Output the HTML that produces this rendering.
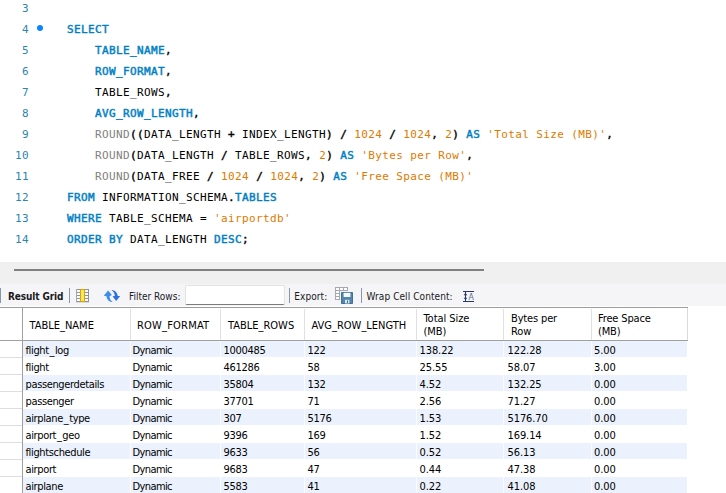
<!DOCTYPE html>
<html>
<head>
<meta charset="utf-8">
<title>Query</title>
<style>
html,body{margin:0;padding:0;}
body{width:726px;height:493px;position:relative;overflow:hidden;background:#fff;
  font-family:"DejaVu Sans Condensed","Liberation Sans",sans-serif;font-size:11px;color:#000;}
.abs{position:absolute;}
/* ---------- code editor ---------- */
#code{position:absolute;left:0;top:0;width:726px;height:262px;background:#fff;
  font-family:"DejaVu Sans Mono",monospace;font-size:11px;letter-spacing:0.3775px;}
.ln{position:absolute;left:0;width:726px;height:21px;line-height:21px;white-space:pre;}
.ln .n{position:absolute;left:0;width:29px;text-align:right;color:#2b86ad;}
.ln .c{position:absolute;left:67px;}
.k{color:#0080c4;-webkit-text-stroke:0.45px #0080c4;}
.o{color:#000;-webkit-text-stroke:0.4px #000;}
.f{color:#808080;}
.s{color:#dd7a00;}
.dot{position:absolute;left:37px;top:25px;width:6px;height:6px;border-radius:50%;background:#0a84ff;}
/* ---------- splitter strip ---------- */
#strip{position:absolute;left:0;top:262px;width:726px;height:22px;background:#f0f0f0;}
#strip i{position:absolute;left:14px;top:7px;width:470px;height:2px;background:#808080;}
/* ---------- toolbar ---------- */
#tb{position:absolute;left:0;top:284px;width:726px;height:22px;background:#f5f5f7;}
.sep{position:absolute;top:4px;width:1px;height:15px;background:#8797aa;}
.tl{position:absolute;top:1px;height:23px;line-height:23px;white-space:pre;font-size:10px;color:#1a1a1e;}
#filter{position:absolute;left:185px;top:1px;width:98px;height:18px;background:#fff;
  border:1px solid #e3e3e3;border-bottom:1px solid #7c7c7c;border-radius:2px;}
/* ---------- grid ---------- */
#grid{position:absolute;left:0;top:307px;width:726px;height:186px;background:#fff;}
#gtop{position:absolute;left:0;top:0;width:688px;height:1px;background:#9c9c9c;}
#gleft{position:absolute;left:22px;top:0;width:1px;height:186px;background:#a0a0a0;}
#ghb{position:absolute;left:0;top:33px;width:688px;height:1px;background:#a0a0a0;}
#ghr{position:absolute;left:687px;top:1px;width:1px;height:32px;background:#dadada;}
.hs{position:absolute;top:2px;width:1px;height:31px;background:#e0e0e0;}
.h{position:absolute;line-height:13px;white-space:pre;}
.row{position:absolute;left:23px;width:664px;height:16px;}
.row.a{background:#ebf2fd;}
.rh{position:absolute;left:0;width:22px;height:1px;background:#dedede;}
.cs{position:absolute;top:34px;width:1px;height:152px;background:rgba(255,255,255,.75);}
.d{position:absolute;margin-top:1px;margin-left:-0.5px;height:17px;line-height:17px;white-space:pre;letter-spacing:-0.3px;}
.d.t{letter-spacing:-0.36px;}
.d.y{letter-spacing:-0.6px;}
.d.p{letter-spacing:-0.1px;}
.d u{text-decoration:none;margin:0 0.8px;}
</style>
</head>
<body>

<div id="code">
  <div class="ln" style="top:-2px"><span class="n">3</span></div>
  <div class="ln" style="top:19px"><span class="n">4</span><span class="c"><span class="k">SELECT</span></span></div>
  <div class="ln" style="top:40px"><span class="n">5</span><span class="c">    <span class="k">TABLE_NAME</span><span class="o">,</span></span></div>
  <div class="ln" style="top:61px"><span class="n">6</span><span class="c">    <span class="k">ROW_FORMAT</span><span class="o">,</span></span></div>
  <div class="ln" style="top:82px"><span class="n">7</span><span class="c">    TABLE_ROWS<span class="o">,</span></span></div>
  <div class="ln" style="top:103px"><span class="n">8</span><span class="c">    <span class="k">AVG_ROW_LENGTH</span><span class="o">,</span></span></div>
  <div class="ln" style="top:124px"><span class="n">9</span><span class="c">    <span class="f">ROUND</span><span class="o">((</span>DATA_LENGTH <span class="o">+</span> INDEX_LENGTH<span class="o">)</span> <span class="o">/</span> <span class="s">1024</span> <span class="o">/</span> <span class="s">1024</span><span class="o">,</span> <span class="s">2</span><span class="o">)</span> <span class="k">AS</span> <span class="s">'Total Size (MB)'</span><span class="o">,</span></span></div>
  <div class="ln" style="top:145px"><span class="n">10</span><span class="c">    <span class="f">ROUND</span><span class="o">(</span>DATA_LENGTH <span class="o">/</span> TABLE_ROWS<span class="o">,</span> <span class="s">2</span><span class="o">)</span> <span class="k">AS</span> <span class="s">'Bytes per Row'</span><span class="o">,</span></span></div>
  <div class="ln" style="top:166px"><span class="n">11</span><span class="c">    <span class="f">ROUND</span><span class="o">(</span>DATA_FREE <span class="o">/</span> <span class="s">1024</span> <span class="o">/</span> <span class="s">1024</span><span class="o">,</span> <span class="s">2</span><span class="o">)</span> <span class="k">AS</span> <span class="s">'Free Space (MB)'</span></span></div>
  <div class="ln" style="top:187px"><span class="n">12</span><span class="c"><span class="k">FROM</span> INFORMATION_SCHEMA<span class="o">.</span><span class="k">TABLES</span></span></div>
  <div class="ln" style="top:208px"><span class="n">13</span><span class="c"><span class="k">WHERE</span> TABLE_SCHEMA = <span class="s">'airportdb'</span></span></div>
  <div class="ln" style="top:229px"><span class="n">14</span><span class="c"><span class="k">ORDER BY</span> DATA_LENGTH <span class="k">DESC</span><span class="o">;</span></span></div>
  <div class="dot"></div>
</div>

<div id="strip"><i></i></div>

<div id="tb">
  <div class="sep" style="left:0"></div>
  <div class="tl" style="left:8px;font-weight:bold;letter-spacing:-0.12px">Result Grid</div>
  <div class="sep" style="left:69px"></div>
  <!-- grid icon -->
  <svg class="abs" style="left:76px;top:5px" width="13" height="14" viewBox="0 0 13 14">
    <rect x="0" y="13" width="13" height="1" fill="#d9dade"/>
    <rect x="0" y="0" width="13" height="13" fill="#8d929c"/>
    <rect x="0" y="0" width="1" height="13" fill="#a3a7af"/>
    <path d="M1 1h3v2h-3zM1 4h3v2h-3zM1 7h3v2h-3zM1 10h3v2h-3zM9 1h3v2h-3zM9 4h3v2h-3zM9 7h3v2h-3zM9 10h3v2h-3z" fill="#fbfcff"/>
    <rect x="4" y="0" width="5" height="13" fill="#e0a200"/>
    <rect x="5" y="1" width="3" height="11" fill="#ffe85c"/>
  </svg>
  <!-- refresh icon -->
  <svg class="abs" style="left:100px;top:2px" width="24" height="20" viewBox="0 0 24 20">
    <path d="M8.1 4.6 L11.9 9.1 L9.5 10.2 C9.6 12.8 10.8 14.8 12.9 15.8 C10 16.4 7.1 14.6 6.4 10.3 L3.8 9.8 Z" fill="#3d8dec"/>
    <path d="M11.3 4 C14.2 4 17.3 6 17.8 10 L20.2 10 L16.2 15.1 L12.5 10.3 L14.8 10.1 C14.9 8 13.6 5.6 11.3 4 Z" fill="#2d70e2"/>
  </svg>
  <div class="tl" style="left:129px">Filter Rows:</div>
  <div id="filter"></div>
  <div class="sep" style="left:289px"></div>
  <div class="tl" style="left:294.3px;letter-spacing:0.08px">Export:</div>
  <!-- export icon -->
  <svg class="abs" style="left:335px;top:3px" width="20" height="19" viewBox="0 0 20 19">
    <rect x="0" y="0" width="13" height="13" fill="#a6a9b1"/>
    <path d="M1 1h3v2h-3zM5 1h3v2h-3zM9 1h3v2h-3zM1 4h3v2h-3zM5 4h3v2h-3zM9 4h3v2h-3zM1 7h3v2h-3zM5 7h3v2h-3zM9 7h3v2h-3zM1 10h3v2h-3zM5 10h3v2h-3zM9 10h3v2h-3z" fill="#fdfdfe"/>
    <rect x="5" y="4" width="14" height="14" fill="#f5f5f7"/>
    <rect x="6" y="5" width="12" height="12" rx="0.8" fill="#3f7298"/>
    <rect x="7" y="6" width="10" height="10" fill="#5286ac"/>
    <rect x="8.6" y="5.8" width="6.8" height="4.2" fill="#f7f8fa"/>
    <rect x="10" y="12.8" width="4.4" height="3.6" fill="#e2e5e8"/>
    <rect x="12" y="13.4" width="1" height="2.6" fill="#3f7298"/>
  </svg>
  <div class="sep" style="left:361px"></div>
  <div class="tl" style="left:366.5px;letter-spacing:0.08px">Wrap Cell Content:</div>
  <!-- wrap icon -->
  <svg class="abs" style="left:463px;top:7px" width="12" height="11" viewBox="0 0 12 11">
    <path d="M0 0h11v1h-11zM0 10h11v1h-11zM2 0h1v11h-1z" fill="#27396a"/>
    <path d="M0.7 4.2L2.5 1.8L4.3 4.2ZM0.7 6.8L2.5 9.2L4.3 6.8Z" fill="#27396a"/>
    <text x="5.6" y="8.9" font-family="'DejaVu Sans Condensed','Liberation Sans',sans-serif" font-size="8.6" fill="#5d6c90">A</text>
  </svg>
</div>

<div id="grid">
  <div id="gtop"></div>
  <div id="gleft"></div>
  <div id="ghb"></div>
  <div id="ghr"></div>
  <div class="hs" style="left:130px"></div>
  <div class="hs" style="left:220px"></div>
  <div class="hs" style="left:304px"></div>
  <div class="hs" style="left:416px"></div>
  <div class="hs" style="left:503px"></div>
  <div class="hs" style="left:591px"></div>

  <div class="h" style="left:29.5px;top:12px">TABLE_NAME</div>
  <div class="h" style="left:137px;top:12px;letter-spacing:0.2px">ROW_FORMAT</div>
  <div class="h" style="left:228px;top:12px">TABLE_ROWS</div>
  <div class="h" style="left:311.5px;top:12px">AVG_ROW_LENGTH</div>
  <div class="h" style="left:423.5px;top:5px;letter-spacing:-0.05px">Total Size<br>(MB)</div>
  <div class="h" style="left:511px;top:5px;letter-spacing:-0.15px">Bytes per<br>Row</div>
  <div class="h" style="left:598px;top:5px;letter-spacing:-0.15px">Free Space<br>(MB)</div>

  <div class="row a" style="top:34px"></div>
  <div class="row a" style="top:68px"></div>
  <div class="row a" style="top:102px"></div>
  <div class="row a" style="top:136px"></div>
  <div class="row a" style="top:170px"></div>
  <div class="rh" style="top:50px"></div><div class="rh" style="top:67px"></div><div class="rh" style="top:84px"></div>
  <div class="rh" style="top:101px"></div><div class="rh" style="top:118px"></div><div class="rh" style="top:135px"></div>
  <div class="rh" style="top:152px"></div><div class="rh" style="top:169px"></div>
  <div class="cs" style="left:130px"></div><div class="cs" style="left:220px"></div><div class="cs" style="left:304px"></div>
  <div class="cs" style="left:416px"></div><div class="cs" style="left:503px"></div><div class="cs" style="left:591px"></div>

  <!-- row 1 -->
  <div class="d t" style="left:26px;top:34px">flight<u>_</u>log</div><div class="d y" style="left:133px;top:34px">Dynamic</div><div class="d" style="left:224px;top:34px">1000485</div><div class="d" style="left:308px;top:34px">122</div><div class="d p" style="left:420px;top:34px">138.22</div><div class="d p" style="left:508px;top:34px">122.28</div><div class="d p" style="left:594.5px;top:34px">5.00</div>
  <!-- row 2 -->
  <div class="d t" style="left:26px;top:51px">flight</div><div class="d y" style="left:133px;top:51px">Dynamic</div><div class="d" style="left:224px;top:51px">461286</div><div class="d" style="left:308px;top:51px">58</div><div class="d p" style="left:420px;top:51px">25.55</div><div class="d p" style="left:508px;top:51px">58.07</div><div class="d p" style="left:594.5px;top:51px">3.00</div>
  <!-- row 3 -->
  <div class="d t" style="left:26px;top:68px">passengerdetails</div><div class="d y" style="left:133px;top:68px">Dynamic</div><div class="d" style="left:224px;top:68px">35804</div><div class="d" style="left:308px;top:68px">132</div><div class="d p" style="left:420px;top:68px">4.52</div><div class="d p" style="left:508px;top:68px">132.25</div><div class="d p" style="left:594.5px;top:68px">0.00</div>
  <!-- row 4 -->
  <div class="d t" style="left:26px;top:85px">passenger</div><div class="d y" style="left:133px;top:85px">Dynamic</div><div class="d" style="left:224px;top:85px">37701</div><div class="d" style="left:308px;top:85px">71</div><div class="d p" style="left:420px;top:85px">2.56</div><div class="d p" style="left:508px;top:85px">71.27</div><div class="d p" style="left:594.5px;top:85px">0.00</div>
  <!-- row 5 -->
  <div class="d t" style="left:26px;top:102px">airplane<u>_</u>type</div><div class="d y" style="left:133px;top:102px">Dynamic</div><div class="d" style="left:224px;top:102px">307</div><div class="d" style="left:308px;top:102px">5176</div><div class="d p" style="left:420px;top:102px">1.53</div><div class="d p" style="left:508px;top:102px">5176.70</div><div class="d p" style="left:594.5px;top:102px">0.00</div>
  <!-- row 6 -->
  <div class="d t" style="left:26px;top:119px">airport<u>_</u>geo</div><div class="d y" style="left:133px;top:119px">Dynamic</div><div class="d" style="left:224px;top:119px">9396</div><div class="d" style="left:308px;top:119px">169</div><div class="d p" style="left:420px;top:119px">1.52</div><div class="d p" style="left:508px;top:119px">169.14</div><div class="d p" style="left:594.5px;top:119px">0.00</div>
  <!-- row 7 -->
  <div class="d t" style="left:26px;top:136px">flightschedule</div><div class="d y" style="left:133px;top:136px">Dynamic</div><div class="d" style="left:224px;top:136px">9633</div><div class="d" style="left:308px;top:136px">56</div><div class="d p" style="left:420px;top:136px">0.52</div><div class="d p" style="left:508px;top:136px">56.13</div><div class="d p" style="left:594.5px;top:136px">0.00</div>
  <!-- row 8 -->
  <div class="d t" style="left:26px;top:153px">airport</div><div class="d y" style="left:133px;top:153px">Dynamic</div><div class="d" style="left:224px;top:153px">9683</div><div class="d" style="left:308px;top:153px">47</div><div class="d p" style="left:420px;top:153px">0.44</div><div class="d p" style="left:508px;top:153px">47.38</div><div class="d p" style="left:594.5px;top:153px">0.00</div>
  <!-- row 9 -->
  <div class="d t" style="left:26px;top:170px">airplane</div><div class="d y" style="left:133px;top:170px">Dynamic</div><div class="d" style="left:224px;top:170px">5583</div><div class="d" style="left:308px;top:170px">41</div><div class="d p" style="left:420px;top:170px">0.22</div><div class="d p" style="left:508px;top:170px">41.08</div><div class="d p" style="left:594.5px;top:170px">0.00</div>
</div>

</body>
</html>
